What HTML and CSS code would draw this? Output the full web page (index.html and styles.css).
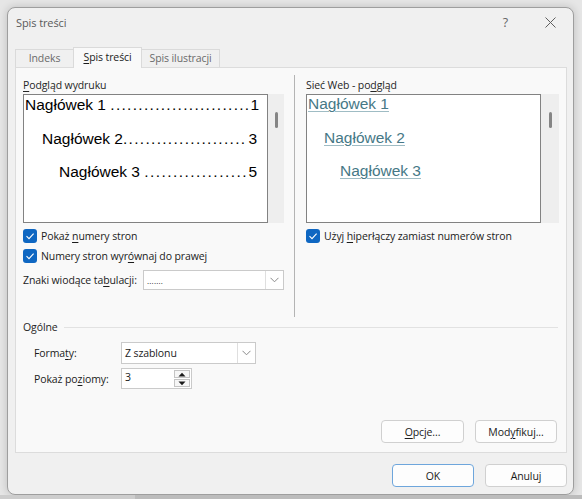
FILE: index.html
```html
<!DOCTYPE html>
<html lang="pl">
<head>
<meta charset="utf-8">
<title>Spis treści</title>
<link rel="stylesheet" href="styles.css">
</head>
<body>
<div class="dialog">
  <div class="titlebar">
    <span class="title">Spis treści</span>
    <span class="help">?</span>
    <span class="close"><svg width="11" height="11" viewBox="0 0 11 11"><path d="M0.5 0.5 L10.5 10.5 M10.5 0.5 L0.5 10.5" stroke="#5f5f5f" stroke-width="1" fill="none"/></svg></span>
  </div>
  <div class="body">
    <div class="tabs">
      <div class="tab tab-1">Indeks</div>
      <div class="tab tab-2 active"><u>S</u>pis treści</div>
      <div class="tab tab-3">Spis ilustracji</div>
    </div>
    <div class="panel">
      <div class="top">
        <div class="col col-left">
          <div class="label"><u>P</u>odgląd wydruku</div>
          <div class="preview">
            <div class="pbox print">
              <div class="pline lv1"><span>Nagłówek 1&nbsp;</span><span class="dots">.........................</span><span class="pnum">1</span></div>
              <div class="pline lv2"><span>Nagłówek 2</span><span class="dots">......................</span><span class="pnum">3</span></div>
              <div class="pline lv3"><span>Nagłówek 3&nbsp;</span><span class="dots d-wide">..................</span><span class="pnum">5</span></div>
            </div>
            <div class="track"><div class="thumb"></div></div>
          </div>
          <div class="check first">
            <span class="box"><svg width="14" height="14" viewBox="0 0 14 14"><path d="M3.5 7.2 L6 9.6 L10.6 4.6" stroke="#fff" stroke-width="1.1" fill="none"/></svg></span>
            <span>Pokaż <u>n</u>umery stron</span>
          </div>
          <div class="check">
            <span class="box"><svg width="14" height="14" viewBox="0 0 14 14"><path d="M3.5 7.2 L6 9.6 L10.6 4.6" stroke="#fff" stroke-width="1.1" fill="none"/></svg></span>
            <span>Numery stron wyr<u>ó</u>wnaj do prawej</span>
          </div>
          <div class="field-row tabrow">
            <span class="flabel w-tab">Znaki wiodące ta<u>b</u>ulacji:</span>
            <div class="combo c-tab">
              <span class="combo-text dots-val">.......</span>
              <span class="combo-btn"><svg width="9" height="6" viewBox="0 0 9 6"><path d="M0.5 0.8 L4.5 4.8 L8.5 0.8" stroke="#8a8a8a" stroke-width="1" fill="none"/></svg></span>
            </div>
          </div>
        </div>
        <div class="vdiv"></div>
        <div class="col col-right">
          <div class="label">Sieć Web - po<u>d</u>gląd</div>
          <div class="preview">
            <div class="pbox web">
              <div class="wline lv1"><span>Nagłówek 1</span></div>
              <div class="wline lv2"><span>Nagłówek 2</span></div>
              <div class="wline lv3"><span>Nagłówek 3</span></div>
            </div>
            <div class="track wide"><div class="thumb"></div></div>
          </div>
          <div class="check first">
            <span class="box"><svg width="14" height="14" viewBox="0 0 14 14"><path d="M3.5 7.2 L6 9.6 L10.6 4.6" stroke="#fff" stroke-width="1.1" fill="none"/></svg></span>
            <span>Użyj <u>h</u>iperłączy zamiast numerów stron</span>
          </div>
        </div>
      </div>
      <div class="general">
        <div class="ghead"><span>Ogólne</span><span class="gline"></span></div>
        <div class="field-row frow">
          <span class="flabel w-gen">Forma<u>t</u>y:</span>
          <div class="combo c-fmt">
            <span class="combo-text">Z szablonu</span>
            <span class="combo-btn"><svg width="9" height="6" viewBox="0 0 9 6"><path d="M0.5 0.8 L4.5 4.8 L8.5 0.8" stroke="#8a8a8a" stroke-width="1" fill="none"/></svg></span>
          </div>
        </div>
        <div class="field-row lrow">
          <span class="flabel w-gen">Pokaż po<u>z</u>iomy:</span>
          <div class="spin">
            <span class="spin-val">3</span>
            <span class="spin-btns">
              <span class="sbtn"><svg width="8" height="5" viewBox="0 0 8 5"><path d="M0.5 4.5 L4 0.8 L7.5 4.5 Z" fill="#1a1a1a"/></svg></span>
              <span class="sbtn"><svg width="8" height="5" viewBox="0 0 8 5"><path d="M0.5 0.5 L4 4.2 L7.5 0.5 Z" fill="#1a1a1a"/></svg></span>
            </span>
          </div>
        </div>
      </div>
      <div class="panel-buttons">
        <button class="btn b-opt"><u>O</u>pcje...</button>
        <button class="btn b-mod">Mod<u>y</u>fikuj...</button>
      </div>
    </div>
    <div class="footer">
      <button class="btn b-ok">OK</button>
      <button class="btn b-cancel">Anuluj</button>
    </div>
  </div>
</div>
</body>
</html>
```

FILE: styles.css
```css
* { box-sizing: border-box; }

html {
  height: 100%;
  background: linear-gradient(to right, #cdcdcd 135px, #bcbcbc 135px) left bottom / 100% 4px no-repeat, #e6e6e6;
}

body {
  margin: 0;
  padding: 7px 0 0 7px;
  font-family: "Open Sans", "Noto Sans", sans-serif;
  font-size: 10.5px;
  letter-spacing: -0.1px;
  color: #1b1b1b;
}

u { text-decoration: underline; text-underline-offset: 2px; text-decoration-thickness: 1px; }

.dialog {
  width: 567px;
  height: 488px;
  border: 1px solid #9e9e9e;
  border-radius: 8px;
  background: #f0f0f0;
  box-shadow: 0 0 9px rgba(0, 0, 0, 0.18);
  display: flex;
  flex-direction: column;
}

.titlebar {
  height: 39px;
  display: flex;
  align-items: flex-start;
  padding: 7px 17px 0 8px;
  line-height: 16px;
}
.title { flex: 1; color: #5a5a5a; font-size: 11px; }
.help { color: #666; font-size: 12.5px; margin-right: 37px; }
.close { display: flex; padding-top: 2px; }

.body {
  flex: 1;
  display: flex;
  flex-direction: column;
  padding: 0 6px 0 7px;
}

.tabs {
  display: flex;
  align-items: flex-end;
  height: 20px;
}
.tab {
  height: 18px;
  line-height: 17px;
  text-align: center;
  border: 1px solid #dadada;
  border-bottom: none;
  background: #f0f0f0;
  color: #6a6a6a;
}
.tab + .tab { margin-left: -1px; }
.tab-1 { width: 59px; }
.tab-2 { width: 69px; }
.tab-3 { width: 79px; }
.tab.active {
  height: 21px;
  line-height: 19px;
  background: #f9f9f9;
  color: #1b1b1b;
  margin-bottom: -1px;
  position: relative;
  z-index: 1;
}

.panel {
  height: 386px;
  border: 1px solid #dcdcdc;
  background: #f9f9f9;
  display: flex;
  flex-direction: column;
}

.top { display: flex; height: 249px; }
.col-left { width: 261px; margin-left: 7px; padding-top: 9px; }
.col-right { width: 253px; padding-top: 9px; }
.vdiv {
  width: 1px;
  height: 242px;
  margin: 7px 11px 0 10px;
  background: #b4b4b4;
}

.label { height: 16px; line-height: 16px; margin-bottom: 1px; color: #262626; }

.preview { display: flex; height: 129px; }
.pbox {
  flex: 1;
  min-width: 0;
  overflow: hidden;
  background: #fff;
  border: 1px solid #828282;
  display: flex;
  flex-direction: column;
  gap: 13.5px;
  font-family: "Liberation Sans", Arial, sans-serif;
  font-size: 15.5px;
  letter-spacing: 0;
  line-height: 20px;
  color: #000;
}
.print { padding: 0 10px 0 1px; }
.web { padding: 0 4px 0 1px; }
.pline { display: flex; white-space: nowrap; }
.dots { letter-spacing: 1.3px; }
.dots.d-wide { letter-spacing: 1.45px; }
.pnum { margin-left: auto; }
.print .lv2 { padding-left: 17px; }
.print .lv3 { padding-left: 34px; }
.wline span { color: #467886; text-decoration: underline; text-decoration-thickness: 1px; text-underline-offset: 2px; text-decoration-color: #9fbcc4; }
.web .lv1 { margin-top: -1px; }
.web .lv2 { padding-left: 16px; }
.web .lv3 { padding-left: 32px; }

.track { flex: none; width: 16px; background: #eeeeee; display: flex; justify-content: center; }
.track.wide { width: 18px; }
.thumb { width: 3px; height: 16px; margin-top: 18px; background: #858585; border-radius: 2px; }

.check { display: flex; align-items: center; height: 20px; gap: 4px; }
.check.first { margin-top: 3px; }
.box {
  width: 14px;
  height: 14px;
  border-radius: 3px;
  background: #0f67c2;
  display: flex;
}

.field-row { display: flex; align-items: center; }
.flabel { flex: none; }
.tabrow { margin-top: 4px; height: 20px; }
.w-tab { width: 120px; }
.w-gen { width: 87px; margin-left: 11px; }

.combo {
  display: flex;
  height: 100%;
  border: 1px solid #cacaca;
  background: #fff;
}
.c-tab { width: 141px; }
.c-fmt { width: 135px; }
.combo-text { flex: 1; padding-left: 3px; display: flex; align-items: center; }
.dots-val { font-size: 8px; letter-spacing: 0.2px; padding-top: 1px; }
.combo-btn {
  width: 18px;
  border-left: 1px solid #dfdfdf;
  display: flex;
  align-items: center;
  justify-content: center;
}

.general { padding: 2px 8px 0 7px; }
.ghead { display: flex; align-items: center; gap: 6px; height: 16px; line-height: 16px; color: #262626; }
.gline { flex: 1; height: 1px; background: #e2e2e2; }
.frow { margin-top: 7px; height: 22px; }
.lrow { margin-top: 4px; height: 21px; }

.spin {
  width: 71px;
  height: 100%;
  border: 1px solid #cacaca;
  background: #fff;
  display: flex;
}
.spin-val { flex: 1; padding-left: 3px; line-height: 16px; }
.spin-btns {
  display: flex;
  flex-direction: column;
  gap: 1px;
  padding: 1px 1px 1px 0;
}
.sbtn {
  width: 16px;
  flex: 1;
  border: 1px solid #c4c4c4;
  background: #f6f6f6;
  display: flex;
  align-items: center;
  justify-content: center;
}

.panel-buttons {
  display: flex;
  justify-content: flex-end;
  gap: 11px;
  margin-top: auto;
  padding: 0 9px 9px 0;
}

.btn {
  height: 23px;
  border: 1px solid #d0d0d0;
  border-radius: 4px;
  background: #fdfdfd;
  font-family: inherit;
  font-size: 10.5px;
  letter-spacing: -0.1px;
  color: #1b1b1b;
  padding: 0;
}
.b-opt { width: 83px; }
.b-mod { width: 82px; }

.footer {
  display: flex;
  justify-content: flex-end;
  gap: 11px;
  padding-top: 11px;
}
.b-ok { width: 82px; border-color: #6ea6dc; }
.b-cancel { width: 82px; }
```
